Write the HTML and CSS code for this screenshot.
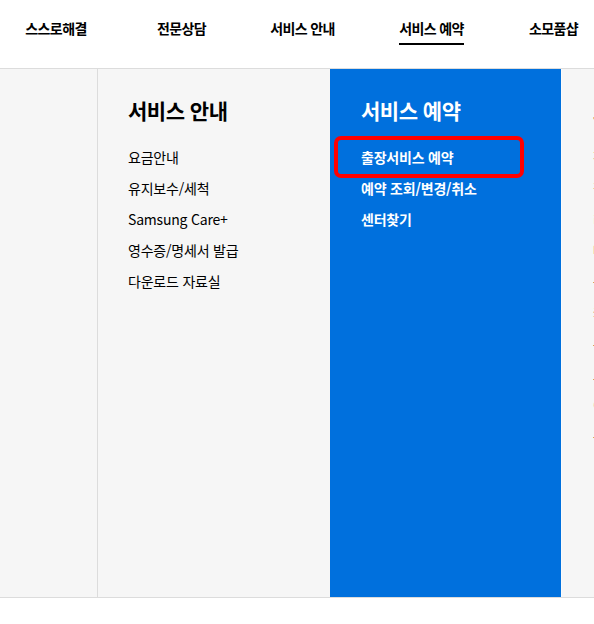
FILE: index.html
```html
<!DOCTYPE html>
<html lang="ko">
<head>
<meta charset="utf-8">
<link rel="stylesheet" href="styles.css">
</head>
<body>
<nav class="gnb">
  <div class="gnb-item w1"><span class="gnb-label">스스로해결</span></div>
  <div class="gnb-item w2"><span class="gnb-label">전문상담</span></div>
  <div class="gnb-item w3"><span class="gnb-label">서비스 안내</span></div>
  <div class="gnb-item w4"><span class="gnb-label active">서비스 예약</span></div>
  <div class="gnb-item w5"><span class="gnb-label">소모품샵</span></div>
</nav>
<div class="panel">
  <div class="col col-empty"></div>
  <div class="col col-menu">
    <h2 class="col-title">서비스 안내</h2>
    <ul class="menu">
      <li>요금안내</li>
      <li>유지보수/세척</li>
      <li>Samsung Care+</li>
      <li>영수증/명세서 발급</li>
      <li>다운로드 자료실</li>
    </ul>
  </div>
  <div class="col col-menu col-active">
    <h2 class="col-title">서비스 예약</h2>
    <ul class="menu">
      <li class="highlight">출장서비스 예약</li>
      <li>예약 조회/변경/취소</li>
      <li>센터찾기</li>
    </ul>
  </div>
  <div class="col col-menu col-last">
    <h2 class="col-title">소모품샵</h2>
    <ul class="menu">
      <li>정품 소모품</li>
      <li>필터 구매</li>
      <li>리모컨</li>
      <li>배터리</li>
      <li>충전기</li>
      <li>케이블</li>
      <li>주문조회</li>
      <li>교환/반품</li>
      <li>이벤트</li>
      <li>공지사항</li>
    </ul>
  </div>
</div>
</body>
</html>
```

FILE: styles.css
```css
* { box-sizing: border-box; }
html, body { margin: 0; padding: 0; background: #fff; }
body {
  width: 594px;
  overflow: hidden;
  font-family: "Noto Sans CJK KR", "Noto Sans", sans-serif;
  color: #000;
}
.gnb {
  width: 600px;
  height: 69px;
  display: flex;
  align-items: flex-start;
  padding-top: 15px;
  border-bottom: 1px solid #dcdcdc;
}
.gnb-item { flex: none; text-align: center; white-space: nowrap; }
.w1 { width: 112px; }
.w2 { width: 139px; }
.w3 { width: 103px; }
.w4 { width: 155px; }
.w5 { width: 89px; }
.gnb-label {
  display: inline-block;
  font-size: 14px;
  font-weight: 700;
  line-height: 22px;
  letter-spacing: -0.6px;
  padding-bottom: 4px;
  border-bottom: 2px solid transparent;
}
.gnb-label.active { border-bottom-color: #000; }
.panel {
  display: flex;
  height: 529px;
  background: #f6f6f6;
  border-bottom: 1px solid #dcdcdc;
  overflow: hidden;
}
.col { flex: none; height: 100%; }
.col-empty { width: 98px; border-right: 1px solid #dcdcdc; }
.col-menu { width: 232px; padding: 26px 0 0 30px; }
.col-active { width: 231px; background: #0070dd; color: #fff; padding-left: 31px; }
.col-last { width: 240px; padding-left: 31px; border-left: 1px solid #fbfbfb; }
.col-title {
  margin: 0 0 17px;
  font-size: 21px;
  font-weight: 700;
  line-height: 30px;
  letter-spacing: -0.5px;
  white-space: nowrap;
}
.menu { list-style: none; margin: 0; padding: 0; }
.menu li {
  font-size: 14px;
  line-height: 31px;
  letter-spacing: -0.2px;
  white-space: nowrap;
}
.col-active .menu li { font-weight: 700; }
.highlight { position: relative; }
.highlight::before {
  content: "";
  box-sizing: border-box;
  position: absolute;
  left: -27px;
  top: -6px;
  width: 190px;
  height: 42px;
  border: 4px solid #f00;
  border-radius: 7px;
}
```
